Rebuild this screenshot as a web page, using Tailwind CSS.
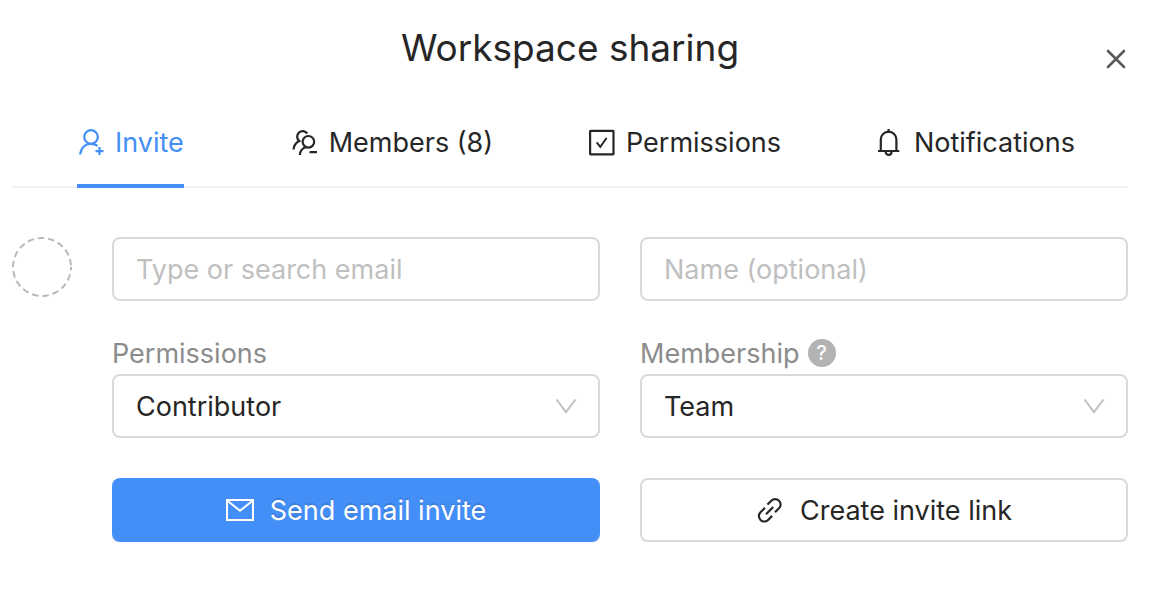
<!DOCTYPE html>
<html lang="en">
<head>
    <meta charset="UTF-8">
    <meta name="viewport" content="width=device-width, initial-scale=1.0">
    <title>Workspace sharing</title>
    <script src="https://cdn.jsdelivr.net/npm/@tailwindcss/browser@4"></script>
</head>
<body class="bg-white font-['Inter',sans-serif] text-[27px] leading-8 text-[#262626]">
    <div class="relative pl-3 pr-7">
        <!-- Header -->
        <h1 class="pt-6 text-center text-[37px] leading-12">Workspace sharing</h1>
        <button type="button" aria-label="Close" class="absolute right-7 top-12 flex h-6 w-6 items-center justify-center text-[#595959]">
            <svg class="h-6 w-6" viewBox="0 0 24 24" fill="none" stroke="currentColor" stroke-width="2.6" stroke-linecap="round"><path d="M4 3l16 16M20 3L4 19"/></svg>
        </button>

        <!-- Tabs -->
        <nav class="mt-8 flex h-[84px] justify-between border-b-2 border-[#f0f0f0] pl-[65px] pr-[53px]">
            <button type="button" class="-mb-0.5 mr-3 flex items-center gap-2.5 border-b-4 border-[#448ef7] pb-0.5 text-[#448ef7]">
                <svg class="h-7 w-7" viewBox="0 0 28 28" fill="none" stroke="currentColor" stroke-width="2.2"><circle cx="14" cy="8" r="6.8"/><path d="M3.2 25.500C4 18.500 8.500 14.800 14 14.800c2.700 0 4.800.7 6.500 2M22.500 18v8M18.500 22.100h8"/></svg>
                Invite
            </button>
            <button type="button" class="flex items-center gap-2.5 pb-1">
                <svg class="h-7 w-7" viewBox="0 0 28 28" fill="none" stroke="currentColor" stroke-width="2.2"><path d="M16.300 4.700A5.500 5.500 0 1 0 8.300 12C5 13.500 3 16 2.500 20.500"/><circle cx="17.400" cy="12.800" r="5.800"/><path d="M15 18.300C11 19.200 9.200 22 8.800 26M18.500 23.200h7.500"/></svg>
                Members (8)
            </button>
            <button type="button" class="flex items-center gap-2.5 pb-1">
                <svg class="h-7 w-7" viewBox="0 0 28 28" fill="none" stroke="currentColor" stroke-width="2.2"><rect x="2.1" y="1.9" width="23.4" height="23.4" rx=".5"/><path stroke-width="1.9" d="M8.700 13.300l3.600 4.600 6.300-8.900"/></svg>
                Permissions
            </button>
            <button type="button" class="flex items-center gap-2.5 pb-1">
                <svg class="h-7 w-7" viewBox="0 0 28 28" fill="none" stroke="currentColor" stroke-width="2.2"><path d="M4.800 22V10.500a7.800 7.800 0 0 1 15.600 0V22M2 22h21.300M12.600 0v4M9.700 23a2.900 2.900 0 0 0 5.800 0"/></svg>
                Notifications
            </button>
        </nav>

        <!-- Invite form -->
        <form class="flex gap-10 pt-[49px]">
            <svg class="h-15 w-15 shrink-0" viewBox="0 0 60 60" fill="none" stroke="#b4b8bf" stroke-width="2"><circle cx="30" cy="30" r="29" stroke-dasharray="6.500 3.900" stroke-dashoffset="3"/></svg>
            <div class="grid flex-1 grid-cols-2 gap-x-10">
                <input type="email" aria-label="Email" placeholder="Type or search email" class="h-16 w-full rounded-lg border-2 border-[#d9d9d9] px-[22px] outline-none placeholder:text-[#bfbfbf]">
                <input type="text" aria-label="Name" placeholder="Name (optional)" class="h-16 w-full rounded-lg border-2 border-[#d9d9d9] px-[22px] outline-none placeholder:text-[#bfbfbf]">

                <div class="mt-9">
                    <label for="permissions" class="flex h-8 items-center pt-0.5 text-[#8c8c8c]">Permissions</label>
                    <div class="relative mt-[5px]">
                        <select id="permissions" class="h-16 w-full appearance-none rounded-lg border-2 border-[#d9d9d9] bg-white px-[22px] pt-0.5">
                            <option>Contributor</option>
                        </select>
                        <svg class="pointer-events-none absolute right-[22px] top-5 h-6 w-6" viewBox="0 0 24 24" fill="none" stroke="#bfbfbf" stroke-width="2"><path d="M2.500 5.500L12 18l9.500-12.500"/></svg>
                    </div>
                </div>
                <div class="mt-9">
                    <div class="flex h-8 items-center gap-2 text-[#8c8c8c]">
                        <label for="membership" class="pt-0.5">Membership</label>
                        <button type="button" aria-label="Membership help" class="flex h-7 w-7 items-center justify-center rounded-full bg-[#b3b3b3] text-xl font-medium text-white">?</button>
                    </div>
                    <div class="relative mt-[5px]">
                        <select id="membership" class="h-16 w-full appearance-none rounded-lg border-2 border-[#d9d9d9] bg-white px-[22px] pt-0.5">
                            <option>Team</option>
                        </select>
                        <svg class="pointer-events-none absolute right-[22px] top-5 h-6 w-6" viewBox="0 0 24 24" fill="none" stroke="#bfbfbf" stroke-width="2"><path d="M2.500 5.500L12 18l9.500-12.500"/></svg>
                    </div>
                </div>

                <button type="submit" class="mt-10 flex h-16 items-center justify-center gap-4 rounded-lg bg-[#448ef7] pt-0.5 text-white shadow-[0_4px_0_rgba(0,0,0,0.045)] text-shadow-[0_-2px_0_rgba(0,0,0,0.12)]">
                    <svg class="h-7 w-7" viewBox="0 0 28 28" fill="none" stroke="currentColor" stroke-width="2"><rect x="1" y="3" width="26" height="20"/><path d="M1.500 3.800L14 13.800 26.500 3.800"/></svg>
                    Send email invite
                </button>
                <button type="button" class="mt-10 flex h-16 items-center justify-center gap-4 rounded-lg border-2 border-[#d9d9d9] bg-white pt-0.5 shadow-[0_4px_0_rgba(0,0,0,0.015)]">
                    <svg class="h-7 w-7" viewBox="0 0 28 28" fill="none" stroke="currentColor" stroke-width="2.2"><path d="M11.500 7.500l3.800-3.800a5.300 5.300 0 0 1 7.700 0 5.300 5.300 0 0 1 0 7.600l-4 4M9 10.800l-4.500 4.500a5.300 5.300 0 0 0 0 7.600 5.300 5.300 0 0 0 7.600 0l4-4M10 17.200l7.200-7.200"/></svg>
                    Create invite link
                </button>
            </div>
        </form>
    </div>
</body>
</html>
